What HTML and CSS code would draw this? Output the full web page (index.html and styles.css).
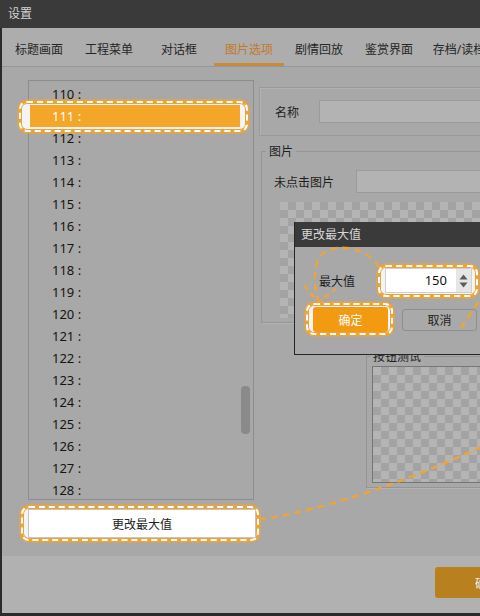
FILE: index.html
```html
<!DOCTYPE html>
<html lang="zh-CN">
<head>
<meta charset="utf-8">
<title>设置</title>
<link rel="stylesheet" href="styles.css">
</head>
<body>
<div class="window">
  <header class="titlebar">设置</header>
  <nav class="tabs">
    <span class="tab">标题画面</span>
    <span class="tab">工程菜单</span>
    <span class="tab">对话框</span>
    <span class="tab active">图片选项</span>
    <span class="tab">剧情回放</span>
    <span class="tab">鉴赏界面</span>
    <span class="tab">存档/读档</span>
    <span class="tab">系统设置</span>
  </nav>
  <main class="content">
    <section class="left-col">
      <div class="list-panel">
        <ul class="list">
          <li>110 :</li>
          <li class="selected mark">111 :</li>
          <li>112 :</li>
          <li>113 :</li>
          <li>114 :</li>
          <li>115 :</li>
          <li>116 :</li>
          <li>117 :</li>
          <li>118 :</li>
          <li>119 :</li>
          <li>120 :</li>
          <li>121 :</li>
          <li>122 :</li>
          <li>123 :</li>
          <li>124 :</li>
          <li>125 :</li>
          <li>126 :</li>
          <li>127 :</li>
          <li>128 :</li>
        </ul>
        <div class="scroll-track"><div class="scroll-thumb"></div></div>
      </div>
      <button class="max-btn mark">更改最大值</button>
    </section>
    <section class="right-col">
      <div class="name-group">
        <span class="field-label">名称</span>
        <span class="field-input"></span>
      </div>
      <fieldset class="group pic-group">
        <legend>图片</legend>
        <div class="pic-row">
          <span class="pic-label">未点击图片</span>
          <span class="field-input"></span>
        </div>
        <div class="checker pic-preview"></div>
      </fieldset>
      <fieldset class="group test-group">
        <legend>按钮测试</legend>
        <div class="checker test-preview"></div>
      </fieldset>
    </section>
  </main>
  <footer class="bottom-bar">
    <button class="ok-btn">确定</button>
  </footer>
</div>

<div class="dialog">
  <div class="dialog-title">更改最大值</div>
  <div class="dialog-body">
    <div class="dialog-row">
      <span class="dialog-label">最大值</span>
      <div class="spin mark">
        <span class="spin-value">150</span>
        <span class="spin-arrows">
          <svg width="9" height="6" viewBox="0 0 9 6"><path d="M4.5 0.5 L8.5 5.5 L0.5 5.5 Z" fill="#5c5c5c"/></svg>
          <svg width="9" height="6" viewBox="0 0 9 6"><path d="M0.5 0.5 L8.5 0.5 L4.5 5.5 Z" fill="#5c5c5c"/></svg>
        </span>
      </div>
    </div>
    <div class="dialog-buttons">
      <button class="confirm mark">确定</button>
      <button class="cancel">取消</button>
    </div>
  </div>
</div>

<svg class="guides" width="480" height="616" viewBox="0 0 480 616">
  <g fill="none" stroke="#eca53a" stroke-width="2.5" stroke-dasharray="7 5">
    <path d="M259 520 Q365 502 492 442"/>
    <path d="M461 328 L484 294"/>
    <path d="M379 267 C368 250 345 244 329 250 C314 256 312 276 318 300"/>
  </g>
  <path d="M304 285 L318 302 L336 289" fill="none" stroke="#eca53a" stroke-width="2.5" stroke-dasharray="6 4"/>
</svg>
</body>
</html>
```

FILE: styles.css
```css
* {
  box-sizing: border-box;
}

html,
body {
  margin: 0;
  padding: 0;
}

body {
  position: relative;
  width: 480px;
  height: 616px;
  overflow: hidden;
  background: #2b2b2b;
  font-family: "Noto Sans", "Noto Sans CJK SC", sans-serif;
  font-size: 12px;
  color: #1e1e1e;
}

button {
  font: inherit;
  padding: 0;
  cursor: pointer;
}

/* window frame */
.window {
  width: 640px;
  height: 613px;
  margin-left: 2px;
  display: flex;
  flex-direction: column;
  background: #a8a8a8;
}

.titlebar {
  height: 28px;
  margin-left: -2px;
  padding-left: 8px;
  line-height: 28px;
  background: #3a3a3a;
  color: #d2d2d2;
}

/* tab strip */
.tabs {
  height: 39px;
  display: flex;
  padding-left: 2px;
  background: #adadad;
  border-bottom: 1px solid #979797;
}

.tab {
  flex: none;
  width: 70px;
  height: 38px;
  padding-top: 4px;
  display: flex;
  align-items: center;
  justify-content: center;
  white-space: nowrap;
  color: #262626;
}

.tab.active {
  color: #c47a25;
  box-shadow: inset 0 -3px 0 #c98b35;
}

/* main area */
.content {
  flex: 1;
  display: flex;
  align-items: flex-start;
  padding: 13px 0 0 26px;
}

.left-col {
  flex: none;
  width: 228px;
  display: flex;
  flex-direction: column;
  gap: 9px;
  isolation: isolate;
}

.list-panel {
  width: 226px;
  height: 420px;
  display: flex;
  border: 1px solid #8d8d8d;
  isolation: isolate;
}

.list {
  flex: 1;
  list-style: none;
  margin: 0;
  padding: 2px 0 0 1px;
}

.list li {
  height: 22px;
  line-height: 22px;
  padding-left: 22px;
  font-size: 13px;
  color: #141414;
}

.list li.selected {
  position: relative;
  background: #f3a627;
  color: #fff;
}

.scroll-track {
  flex: none;
  width: 13px;
  padding-left: 1px;
}

.scroll-thumb {
  width: 9px;
  height: 48px;
  margin-top: 305px;
  border-radius: 4px;
  background: #8a8a8a;
}

.max-btn {
  position: relative;
  width: 228px;
  height: 29px;
  background: #fff;
  border: 1px solid #c4c4c4;
  color: #222;
}

/* orange/white dashed highlight ring drawn behind a control */
.mark::before {
  content: "";
  position: absolute;
  z-index: -1;
  border: 2px dashed #fff;
  border-radius: 8px;
  background: linear-gradient(#f4f4f4, #f4f4f4) padding-box, #eba43a border-box;
  box-shadow: 0 0 0 1.5px #eba43a, inset 0 0 0 1px #eba43a;
}

.list li.selected::before {
  inset: -4px -8px -5px -11px;
}

.max-btn::before {
  inset: -4px -4px -4px -8px;
}

/* right side */
.right-col {
  flex: none;
  width: 320px;
  margin-left: 3px;
}

.name-group {
  height: 49px;
  margin-top: 7px;
  display: flex;
  align-items: center;
  padding-left: 15px;
  border: 1px solid #9a9a9a;
  box-shadow: inset 1px 1px 0 #b3b3b3;
}

.field-label {
  flex: none;
  width: 44px;
}

.field-input {
  flex: 1;
  height: 23px;
  background: #b3b3b3;
  border: 1px solid #9b9b9b;
}

.group {
  margin: 0;
  border: 1px solid #959595;
  box-shadow: 1px 1px 0 #b4b4b4;
}

.group legend {
  padding: 0 3px;
  line-height: 17px;
}

.pic-group {
  margin-top: 7px;
  margin-left: 2px;
  padding: 0 0 4px 4px;
}

.pic-row {
  display: flex;
  align-items: center;
  margin: 10px 0 0 8px;
}

.pic-label {
  flex: none;
  width: 82px;
}

.checker {
  background-color: #b4b4b4;
  background-image:
    linear-gradient(45deg, #a3a3a3 25%, transparent 25%, transparent 75%, #a3a3a3 75%),
    linear-gradient(45deg, #a3a3a3 25%, transparent 25%, transparent 75%, #a3a3a3 75%);
  background-size: 16px 16px;
  background-position: 0 0, 8px 8px;
}

.pic-preview {
  width: 220px;
  height: 116px;
  margin: 9px 0 0 14px;
}

.test-group {
  width: 200px;
  margin-top: 25px;
  margin-left: 107px;
  padding: 0 0 4px 3px;
}

.test-preview {
  width: 190px;
  height: 117px;
  margin: 1px 0 0 2px;
  border: 1px solid #767676;
}

/* footer */
.bottom-bar {
  height: 57px;
  display: flex;
  align-items: flex-start;
  padding: 11px 0 0 433px;
  background: #b1b1b1;
}

.ok-btn {
  width: 104px;
  height: 31px;
  border: none;
  border-radius: 3px;
  background: #b9801f;
  color: #f3f3f3;
}

/* modal dialog */
.dialog {
  position: absolute;
  left: 294px;
  top: 222px;
  z-index: 5;
  width: 200px;
  height: 133px;
  background: #a8a8a8;
  border-left: 1px solid #262626;
  border-bottom: 1px solid #262626;
  isolation: isolate;
}

.dialog-title {
  height: 25px;
  line-height: 25px;
  padding-left: 6px;
  background: #3a3a3a;
  color: #d8d8d8;
}

.dialog-body {
  padding-left: 24px;
}

.dialog-row {
  display: flex;
  align-items: center;
  height: 25px;
  margin-top: 21px;
}

.dialog-label {
  flex: none;
  width: 66px;
  color: #1e1e1e;
}

.spin {
  position: relative;
  flex: none;
  width: 87px;
  height: 25px;
  display: flex;
  background: #fff;
  border: 1px solid #d0d0d0;
}

.spin::before {
  inset: -4px -7px -5px -8px;
}

.spin-value {
  flex: 1;
  text-align: right;
  padding-right: 9px;
  line-height: 23px;
  font-size: 13px;
  color: #111;
}

.spin-arrows {
  flex: none;
  width: 15px;
  display: flex;
  flex-direction: column;
  align-items: center;
  justify-content: center;
  gap: 2px;
  background: #e6e6e6;
}

.spin-arrows svg {
  display: block;
}

.dialog-buttons {
  display: flex;
  align-items: center;
  margin: 14px 0 0 -6px;
}

.confirm {
  position: relative;
  width: 75px;
  height: 25px;
  border: none;
  border-radius: 3px;
  background: #f29a12;
  color: #fff;
}

.confirm::before {
  inset: -4px -5px -3px -7px;
}

.cancel {
  width: 75px;
  height: 22px;
  margin-left: 14px;
  border: 1px solid #8f8f8f;
  border-radius: 3px;
  background: #a9a9a9;
  color: #1e1e1e;
}

/* dashed guide arrows */
.guides {
  position: absolute;
  left: 0;
  top: 0;
  z-index: 10;
  pointer-events: none;
}
```
